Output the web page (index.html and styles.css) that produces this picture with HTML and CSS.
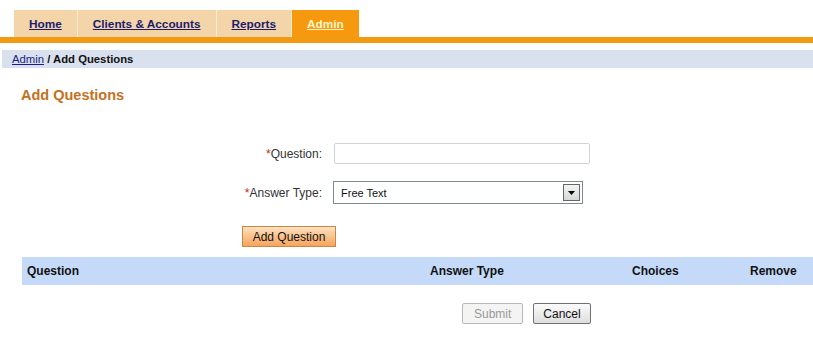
FILE: index.html
```html
<!DOCTYPE html>
<html lang="en">
<head>
  <meta charset="UTF-8" />
  <title>Add Questions</title>
  <link rel="stylesheet" href="styles.css">
</head>
<body>
  <div class="tabs">
    <a href="#" class="tab">Home</a>
    <a href="#" class="tab">Clients &amp; Accounts</a>
    <a href="#" class="tab">Reports</a>
    <a href="#" class="tab ativo">Admin</a>
  </div>
  <div class="linha-laranja"></div>

  <div class="migalha">
    <a href="#">Admin</a> <b>/ Add Questions</b>
  </div>

  <h1 class="titulo">Add Questions</h1>

  <div class="formulario">
    <label class="rotulo"><span class="obrig">*</span>Question:</label>
    <input type="text" class="campo">

    <label class="rotulo"><span class="obrig">*</span>Answer Type:</label>
    <div class="seletor">
      <span>Free Text</span>
      <span class="seta"><svg width="7" height="4" viewBox="0 0 7 4"><path d="M0 0h7L3.5 4z" fill="#000"/></svg></span>
    </div>
  </div>

  <button class="btn-add">Add Question</button>

  <div class="tabela-cab">
    <span>Question</span>
    <span>Answer Type</span>
    <span>Choices</span>
    <span>Remove</span>
  </div>

  <div class="acoes">
    <button class="btn" disabled>Submit</button>
    <button class="btn">Cancel</button>
  </div>
</body>
</html>
```

FILE: styles.css
```css
* {
  margin: 0;
  padding: 0;
  box-sizing: border-box;
  font-family: 'Liberation Sans', Arial, sans-serif;
}

body {
  background: #fff;
  width: 813px;
  color: #222;
}

.tabs {
  display: flex;
  padding: 10px 0 0 14px;
  height: 37px;
}

.tab {
  display: flex;
  align-items: center;
  padding: 0 15px;
  background: #f4d5aa;
  border-right: 1px solid #fbeed8;
  font-size: 11.8px;
  font-weight: bold;
  color: #1c1c6b;
}

.tab.ativo {
  background: #f7990f;
  color: #fff6c8;
  border-right: none;
}

.linha-laranja {
  height: 6px;
  background: #f39a13;
  margin-bottom: 7px;
}

.migalha {
  margin-left: 2px;
  height: 18px;
  background: #d9e0ee;
  padding-left: 10px;
  font-size: 11.3px;
  line-height: 18px;
  color: #111;
}

.migalha a {
  color: #1c1c8b;
}

.titulo {
  font-size: 14.5px;
  font-weight: bold;
  color: #c4701e;
  margin: 19px 0 0 21px;
}

.formulario {
  display: grid;
  grid-template-columns: 322px auto;
  column-gap: 12px;
  row-gap: 17px;
  align-items: center;
  margin-top: 40px;
}

.rotulo {
  text-align: right;
  font-size: 12px;
  color: #333;
}

.obrig {
  color: #cc2222;
}

.campo {
  width: 256px;
  height: 21px;
  border: 1px solid #cfd3d8;
  border-radius: 2px;
}

.seletor {
  display: flex;
  align-items: center;
  justify-content: space-between;
  width: 250px;
  height: 23px;
  margin-left: -1px;
  border: 1px solid #7f8a99;
  padding: 0 2px 0 7px;
  font-size: 11px;
  color: #111;
}

.seta {
  display: flex;
  align-items: center;
  justify-content: center;
  width: 17px;
  height: 17px;
  border: 1px solid #666;
  background: linear-gradient(#f4f4f4, #d6d6d6);
}

.btn-add {
  display: block;
  margin: 22px 0 0 242px;
  width: 94px;
  height: 21px;
  font-size: 12px;
  color: #111;
  border: 1px solid #c8874a;
  background: linear-gradient(#fde1bf, #f7a45c);
}

.tabela-cab {
  display: grid;
  grid-template-columns: 403px 202px 118px auto;
  align-items: center;
  margin: 10px 0 0 22px;
  padding-left: 5px;
  height: 28px;
  background: #c5d9f8;
  font-size: 12px;
  font-weight: bold;
  color: #111;
}

.acoes {
  display: flex;
  gap: 10px;
  margin: 18px 0 0 462px;
}

.btn {
  height: 21px;
  padding: 0 11px;
  font-size: 12px;
  color: #111;
  border: 1px solid #707070;
  border-radius: 2px;
  background: linear-gradient(#fbfbfb, #dedede);
}

.btn + .btn {
  padding: 0 9px;
}

.btn:disabled {
  color: #999;
  border-color: #b8b8b8;
  background: #f4f4f4;
}
```
